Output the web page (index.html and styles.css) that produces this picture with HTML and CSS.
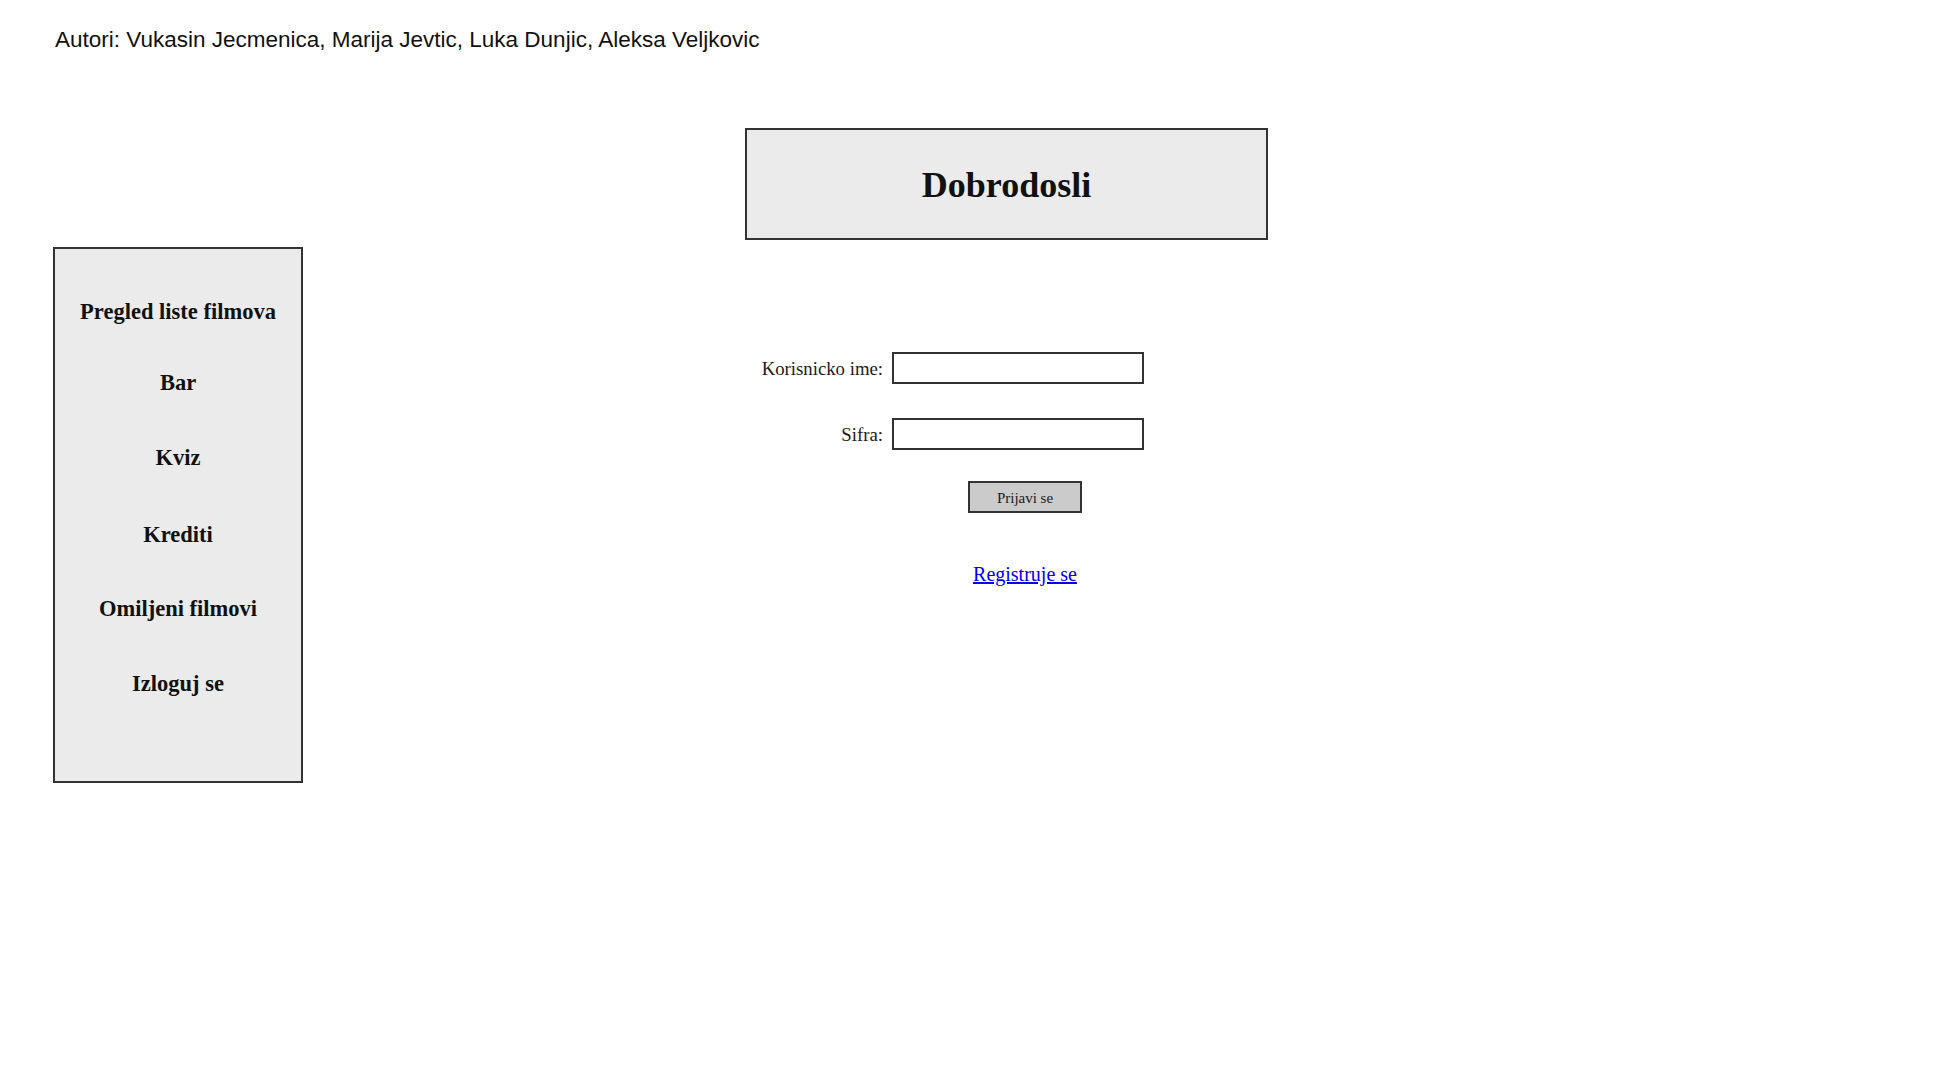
FILE: index.html
```html
<!DOCTYPE html>
<html lang="sr">
<head>
<meta charset="utf-8">
<title>Dobrodosli</title>
<link rel="stylesheet" href="styles.css">
</head>
<body>
<p class="authors">Autori: Vukasin Jecmenica, Marija Jevtic, Luka Dunjic, Aleksa Veljkovic</p>
<div class="layout">
  <nav class="sidebar">
    <a class="nav-item">Pregled liste filmova</a>
    <a class="nav-item">Bar</a>
    <a class="nav-item">Kviz</a>
    <a class="nav-item">Krediti</a>
    <a class="nav-item">Omiljeni filmovi</a>
    <a class="nav-item">Izloguj se</a>
  </nav>
  <main class="content">
    <div class="welcome"><h1 class="welcome-title">Dobrodosli</h1></div>
    <form class="login">
      <div class="fields">
        <label class="field-label" for="user">Korisnicko ime:</label>
        <input class="field-input" id="user" type="text">
        <label class="field-label" for="pass">Sifra:</label>
        <input class="field-input" id="pass" type="password">
      </div>
      <div class="actions">
        <button class="submit" type="button">Prijavi se</button>
        <a class="register" href="#">Registruje se</a>
      </div>
    </form>
  </main>
</div>
</body>
</html>
```
FILE: styles.css
```css
html, body {
  margin: 0;
  padding: 0;
  background: #ffffff;
}

body {
  width: 1959px;
  height: 1085px;
  overflow: hidden;
  color: #111;
  font-family: "Liberation Serif", "Times New Roman", serif;
}

.authors {
  margin: 0;
  padding: 27px 0 0 55px;
  font-family: "Liberation Sans", Arial, sans-serif;
  font-size: 22.5px;
  line-height: 25px;
  color: #111;
}

.layout {
  display: flex;
  align-items: flex-start;
  margin-top: 76px;
}

.sidebar {
  box-sizing: border-box;
  margin-left: 53px;
  margin-top: 119px;
  width: 250px;
  height: 536px;
  background: #ebebeb;
  border: 2px solid #333;
  padding-top: 50px;
  display: flex;
  flex-direction: column;
  align-items: center;
}

.nav-item {
  display: block;
  font-weight: bold;
  font-size: 22.5px;
  line-height: 25px;
  color: #111;
  text-align: center;
  margin-top: 49px;
}

.nav-item:first-child {
  margin-top: 0;
}

.nav-item:nth-child(2) {
  margin-top: 46px;
}

.nav-item:nth-child(3) {
  margin-top: 50px;
}

.nav-item:nth-child(4) {
  margin-top: 52px;
}

.nav-item:nth-child(6) {
  margin-top: 50px;
}

.content {
  margin-left: 442px;
  display: flex;
  flex-direction: column;
}

.welcome {
  box-sizing: border-box;
  width: 523px;
  height: 112px;
  background: #ebebeb;
  border: 2px solid #333;
  padding-top: 35px;
}

.welcome-title {
  margin: 0;
  text-align: center;
  font-size: 36px;
  line-height: 40px;
  font-weight: bold;
  color: #111;
}

.login {
  display: flex;
  flex-direction: column;
  margin-top: 112px;
}

.fields {
  display: grid;
  grid-template-columns: 138px 252px;
  grid-auto-rows: 32px;
  column-gap: 9px;
  row-gap: 34px;
  align-items: center;
}

.field-label {
  text-align: right;
  font-size: 18.75px;
  line-height: 22px;
  padding-top: 2px;
  color: #1a1a1a;
}

.field-input {
  box-sizing: border-box;
  width: 252px;
  height: 32px;
  margin: 0;
  border: 2px solid #333;
  background: #fff;
  padding: 0 6px;
  font-family: inherit;
  font-size: 16px;
}

.actions {
  width: 560px;
  display: flex;
  flex-direction: column;
  align-items: center;
  margin-top: 31px;
}

.submit {
  box-sizing: border-box;
  width: 114px;
  height: 32px;
  margin: 0;
  padding: 2px 0 0;
  background: #cbcbcb;
  border: 2px solid #333;
  font-family: "Liberation Serif", "Times New Roman", serif;
  font-size: 15px;
  color: #1a1a1a;
}

.register {
  display: block;
  margin-top: 50px;
  font-size: 20px;
  line-height: 22px;
  color: #0000ee;
  text-decoration: underline;
}
```
